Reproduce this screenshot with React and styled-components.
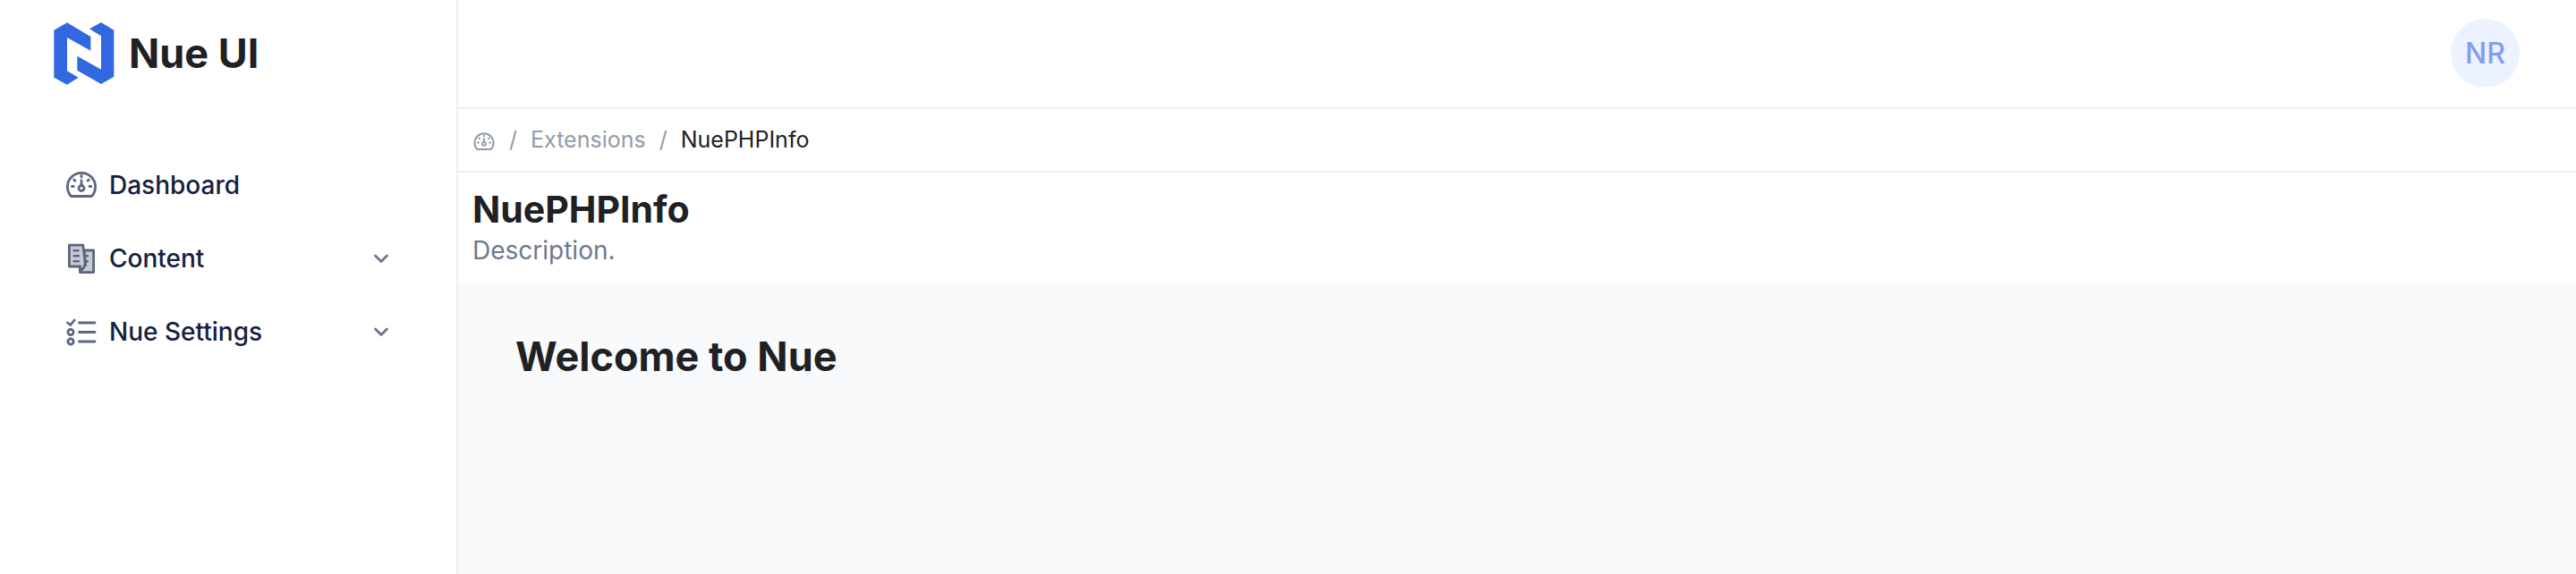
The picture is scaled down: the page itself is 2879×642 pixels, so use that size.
import React from "react";
import styled, { createGlobalStyle } from "styled-components";

const line = "#eeeff5";
const ink = "#202124";
const iconInk = "#5d6680";

const GlobalStyle = createGlobalStyle`
  *, *::before, *::after { box-sizing: border-box; }
  body {
    margin: 0;
    background: #fff;
    color: ${ink};
    font-family: Inter, "Liberation Sans", sans-serif;
  }
  h1, h2, p, ul, ol { margin: 0; padding: 0; }
  ul, ol { list-style: none; }
  a { color: inherit; text-decoration: none; }
`;

const Shell = styled.div`
  display: grid;
  grid-template-columns: 512px minmax(0, 1fr);
  min-height: 100vh;
`;

const Sidebar = styled.aside`
  border-right: 2px solid ${line};
`;

const Brand = styled.a`
  display: flex;
  align-items: center;
  gap: 16px;
  height: 120px;
  padding-left: 60px;
  font-size: 45px;
  line-height: 56px;
  font-weight: 700;
`;

const Menu = styled.ul`
  padding: 46px 75px 0 72px;
`;

const itemLayout = `
  display: flex;
  align-items: center;
  gap: 12px;
  width: 100%;
  height: 82px;
  padding: 0;
  border: 0;
  background: none;
  color: #14213f;
  font: 500 28px/34px Inter, "Liberation Sans", sans-serif;
  text-align: left;
  cursor: pointer;
`;

const MenuLink = styled.a`
  ${itemLayout}
  && { color: #14213f; }
`;

const MenuButton = styled.button`
  ${itemLayout}
`;

const Label = styled.span`
  flex: 1;
`;

const IconSvg = styled.svg`
  flex: none;
  fill: none;
  stroke: currentColor;
  stroke-width: 2.8;
  stroke-linecap: round;
  stroke-linejoin: round;
  color: ${(p) => p.$color || iconInk};
`;

const Main = styled.div`
  display: flex;
  flex-direction: column;
`;

const TopBar = styled.header`
  display: flex;
  align-items: center;
  justify-content: flex-end;
  height: 122px;
  padding: 0 63px 1px;
  border-bottom: 2px solid ${line};
`;

const Avatar = styled.button`
  width: 77px;
  height: 77px;
  padding: 0;
  border: 0;
  border-radius: 50%;
  background: #ecf3fe;
  color: #839df0;
  font: 500 32px/40px Inter, "Liberation Sans", sans-serif;
  cursor: pointer;
`;

const Crumbs = styled.ol`
  display: flex;
  align-items: center;
  height: 71px;
  padding: 0 16px 2px;
  border-bottom: 2px solid ${line};
  font-size: 25px;
  line-height: 32px;
  color: #929ca8;
`;

const Crumb = styled.li`
  display: flex;
  align-items: center;
  color: ${(p) => (p.$current ? ink : "inherit")};

  &:not(:first-child)::before {
    content: "/";
    padding: 0 15px;
    color: #929ca8;
  }
`;

const HomeLink = styled.a`
  display: flex;
  padding-top: 6px;
`;

const PageHead = styled.div`
  height: 124px;
  padding: 16px;
`;

const PageTitle = styled.h1`
  font-size: 41px;
  line-height: 50px;
  font-weight: 700;
`;

const PageText = styled.p`
  font-size: 28px;
  line-height: 42px;
  color: #6b7a8c;
`;

const Content = styled.main`
  flex: 1;
  padding: 52px 64px;
  background: #f8fafc;
`;

const Welcome = styled.h2`
  font-size: 45px;
  line-height: 60px;
  font-weight: 700;
`;

function Logo() {
  return (
    <svg width="68" height="70" viewBox="60 45 204 210" fill="#3168e2" aria-hidden="true">
      <path d="M61 71 105 46l79 47v47l-79-44v112l38 22-38 24-44-24z" />
      <path d="M262 71 219 45l-39 22 39 24v112l-80-45v48l80 46 43-25z" />
    </svg>
  );
}

function Gauge({ width = 38, height = 34, color }) {
  return (
    <IconSvg width={width} height={height} viewBox="-1 0 38 34" $color={color} aria-hidden="true">
      <path d="M6.5 29.5A15.6 15.6 0 1 1 29.5 29.5Z" />
      <circle cx="18" cy="20.5" r="3" />
      <path d="M18 12v5M18 6.5v1.6M7.4 18.5h1.8M27 18.5h1.8M9.7 11l1.2 1.2M26.3 11l-1.2 1.2" />
    </IconSvg>
  );
}

function Documents() {
  return (
    <IconSvg width="38" height="36" viewBox="-4 -1 38 36" aria-hidden="true">
      <path d="M18 8h10.6v24.6H13.4V26L19.6 25z" fill="#c9cbd2" />
      <path d="M1.4 2.2h15.4L19 20c.6 5-1 8-4.6 11l-.8-5H1.4z" fill="#c9cbd2" />
      <path d="M6.5 8.2h5M6.5 14.2h5.5M6.5 20.2h5.5M20.5 14.2h1.5M21 20.2h1" strokeWidth="2.4" />
    </IconSvg>
  );
}

function Checklist() {
  return (
    <IconSvg width="38" height="34" viewBox="-2 -1 38 34" aria-hidden="true">
      <path d="M1.5 6 4.8 8.5 9.2 3M14.5 6h17.5M14.5 16.5h17.5M14.5 27h17.5" />
      <circle cx="5" cy="16.5" r="3.1" />
      <circle cx="5" cy="27" r="3.1" />
    </IconSvg>
  );
}

function Chevron() {
  return (
    <IconSvg width="18" height="12" viewBox="0 0 18 12" $color="#68788a" aria-hidden="true">
      <path d="m2.5 3 6.5 6.5L15.5 3" />
    </IconSvg>
  );
}

const groups = [
  { label: "Content", Icon: Documents },
  { label: "Nue Settings", Icon: Checklist },
];

export default function App() {
  return (
    <>
      <GlobalStyle />
      <Shell>
        <Sidebar>
          <Brand href="#">
            <Logo />
            Nue UI
          </Brand>
          <nav aria-label="Main">
            <Menu>
              <li>
                <MenuLink href="#dashboard">
                  <Gauge />
                  <Label>Dashboard</Label>
                </MenuLink>
              </li>
              {groups.map(({ label, Icon }) => (
                <li key={label}>
                  <MenuButton type="button" aria-expanded="false">
                    <Icon />
                    <Label>{label}</Label>
                    <Chevron />
                  </MenuButton>
                </li>
              ))}
            </Menu>
          </nav>
        </Sidebar>
        <Main>
          <TopBar>
            <Avatar type="button">NR</Avatar>
          </TopBar>
          <nav aria-label="Breadcrumb">
            <Crumbs>
              <Crumb>
                <HomeLink href="#dashboard" aria-label="Dashboard">
                  <Gauge width={26} height={23} color="#929ca8" />
                </HomeLink>
              </Crumb>
              <Crumb>
                <a href="#extensions">Extensions</a>
              </Crumb>
              <Crumb $current aria-current="page">
                NuePHPInfo
              </Crumb>
            </Crumbs>
          </nav>
          <PageHead>
            <PageTitle>NuePHPInfo</PageTitle>
            <PageText>Description.</PageText>
          </PageHead>
          <Content>
            <Welcome>Welcome to Nue</Welcome>
          </Content>
        </Main>
      </Shell>
    </>
  );
}
